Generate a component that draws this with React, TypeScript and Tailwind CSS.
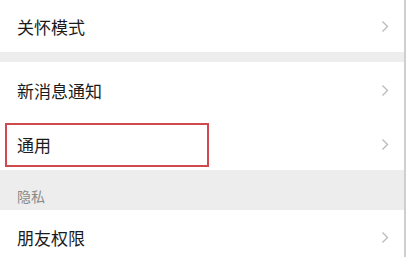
const font = { fontFamily: '"Noto Sans CJK SC", "Noto Sans", sans-serif' };

function Chevron() {
  return (
    <svg width="8" height="13" viewBox="0 0 8 13" className="shrink-0">
      <path d="M1.5 1.5 L6.5 6.5 L1.5 11.5" fill="none" stroke="#b9b9b9" strokeWidth="1.3" />
    </svg>
  );
}

function Row({ label, height, highlight }: { label: string; height: string; highlight?: boolean }) {
  return (
    <div className={`relative flex items-center justify-between bg-white pl-[17px] pr-[15px] ${height}`}>
      <span className="text-[17px] leading-none text-[#1b1b1b]">{label}</span>
      <Chevron />
      {highlight && (
        <div className="absolute left-[5px] top-[5px] h-[44px] w-[204px] border-2 border-[#d0494f]" />
      )}
    </div>
  );
}

export default function App() {
  return (
    <div className="flex h-[257px] w-[408px] overflow-hidden bg-[#ededed]" style={font}>
      <div className="flex-1">
        <Row label="关怀模式" height="h-[52px]" />
        <div className="h-[10px]" />
        <Row label="新消息通知" height="h-[56px]" />
        <Row label="通用" height="h-[52px]" highlight />
        <div className="flex h-[40px] items-end pb-[7px] pl-[17px]">
          <span className="text-[14px] leading-none text-[#8a8a8a]">隐私</span>
        </div>
        <Row label="朋友权限" height="h-[54px]" />
      </div>
      <div className="w-[4px] shrink-0 bg-white">
        <div className="h-full w-[2px] bg-[#cfcfcf]" />
      </div>
    </div>
  );
}
